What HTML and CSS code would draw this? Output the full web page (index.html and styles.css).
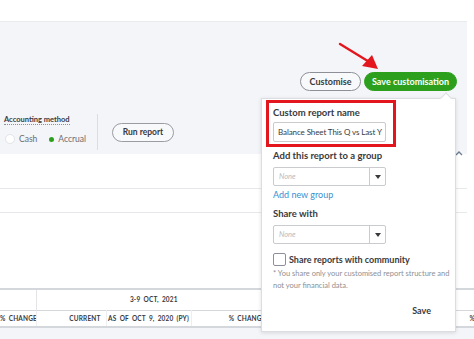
FILE: index.html
```html
<!DOCTYPE html>
<html>
<head>
<meta charset="utf-8">
<link rel="stylesheet" href="styles.css">
</head>
<body>
<div class="page">
  <div class="panel">
    <div class="toolbar">
      <button class="btn btn-outline">Customise</button>
      <button class="btn btn-green">Save customisation</button>
    </div>
    <div class="controls">
      <div class="method">
        <div class="method-label">Accounting method</div>
        <div class="radios">
          <span class="radio"></span><span class="radio-text">Cash</span>
          <span class="radio radio-on"></span><span class="radio-text">Accrual</span>
        </div>
      </div>
      <div class="vsep"></div>
      <button class="btn btn-outline btn-run">Run report</button>
    </div>
  </div>
  <div class="rows">
    <div class="row row1"></div>
    <div class="row row2"></div>
  </div>
  <table class="report">
    <colgroup>
      <col class="w1"><col class="w2"><col class="w3"><col class="w4"><col class="w5">
    </colgroup>
    <tr class="hdr1">
      <td class="c1"></td>
      <td class="group" colspan="3">3-9 OCT, 2021</td>
      <td class="c5"></td>
    </tr>
    <tr class="hdr2">
      <td class="c1 r">% CHANGE</td>
      <td class="c2 r">CURRENT</td>
      <td class="c3">AS OF OCT 9, 2020 (PY)</td>
      <td class="c4 r">% CHANGE</td>
      <td class="c5">%</td>
    </tr>
    <tr class="body-row">
      <td colspan="5"></td>
    </tr>
  </table>

  <svg class="caret" width="8" height="6" viewBox="0 0 8 6"><path d="M1 5 L4 2 L7 5" fill="none" stroke="#6b7c93" stroke-width="1.3"/></svg>

  <svg class="arrow" width="44" height="30" viewBox="0 0 44 30">
    <path d="M2 2 L33 21" stroke="#e3161d" stroke-width="2.4" stroke-linecap="round"/>
    <path d="M40 27 L24 24 L34 13 Z" fill="#e3161d"/>
  </svg>

  <div class="popover">
    <div class="pointer"></div>
    <div class="name-box">
      <div class="label">Custom report name</div>
      <div class="input">Balance Sheet This Q vs Last Y</div>
    </div>
    <div class="label label-group">Add this report to a group</div>
    <div class="select"><span class="placeholder">None</span><span class="drop"><svg width="6" height="4" viewBox="0 0 6 4"><path d="M0 0 H6 L3 4 Z" fill="#393a3d"/></svg></span></div>
    <div class="link">Add new group</div>
    <div class="label label-share">Share with</div>
    <div class="select"><span class="placeholder">None</span><span class="drop"><svg width="6" height="4" viewBox="0 0 6 4"><path d="M0 0 H6 L3 4 Z" fill="#393a3d"/></svg></span></div>
    <div class="check-row"><span class="checkbox"></span><span class="check-text">Share reports with community</span></div>
    <div class="note">* You share only your customised report structure and not your financial data.</div>
    <div class="save-row"><span class="save">Save</span></div>
  </div>
</div>
</body>
</html>
```
FILE: styles.css
```css
* { box-sizing: border-box; }
html, body { margin: 0; padding: 0; background: #fff; }
body {
  font-family: Lato, "Open Sans", sans-serif;
  color: #393a3d;
  width: 474px;
  height: 339px;
  overflow: hidden;
}
.page { position: relative; width: 474px; height: 339px; padding-top: 21px; }

.panel {
  width: 467px;
  height: 133px;
  background: #f4f5f8;
  border-top: 1px solid #e9eaee;
  display: flex;
  flex-direction: column;
}
.toolbar {
  display: flex;
  justify-content: flex-end;
  gap: 3px;
  padding-right: 10px;
  margin-top: 50px;
}
.btn {
  font-family: Lato, sans-serif;
  font-weight: 700;
  font-size: 9px;
  height: 19px;
  border-radius: 10px;
  padding: 0;
  display: flex;
  align-items: center;
  justify-content: center;
  cursor: pointer;
}
.btn-outline {
  background: #f8f9fa;
  border: 1px solid #8d9096;
  color: #393a3d;
  width: 61px;
}
.btn-green {
  background: #2ca01c;
  border: 1px solid #2ca01c;
  color: #fff;
  width: 93px;
}
.controls {
  margin-top: auto;
  margin-bottom: 4px;
  display: flex;
  align-items: stretch;
  height: 36px;
}
.method {
  padding-left: 4px;
  padding-top: 1px;
  width: 97px;
  display: flex;
  flex-direction: column;
  align-items: flex-start;
}
.method-label {
  font-size: 7.5px;
  font-weight: 700;
  border-bottom: 1px dotted #8d9096;
  line-height: 9px;
}
.radios { display: flex; align-items: center; height: 10px; margin-top: 9px; font-size: 8.5px; color: #6b6c72; }
.radio {
  width: 10px; height: 10px; border-radius: 50%;
  background: #fff; border: 1px solid #e3e4e8;
  margin-left: 1px;
}
.radio-on {
  margin-left: 12px;
  width: 5px; height: 5px; border: none;
  background: #2ca01c;
}
.radio-text { margin-left: 4px; }
.vsep { width: 1px; background: #dcdde1; }
.btn-run { align-self: center; margin-left: 14px; width: 62px; font-size: 8.5px; border-color: #9a9ca2; }

.rows { width: 467px; }
.row { border-bottom: 1px solid #e7e8eb; }
.row1 { height: 35px; }
.row2 { height: 24px; }

.report {
  margin-top: 75px;
  border-collapse: collapse;
  width: 474px;
  table-layout: fixed;
  font-size: 6.5px;
  letter-spacing: 0.15px;
  word-spacing: 1.5px;
  font-weight: 700;
  color: #393a3d;
}
.w1 { width: 36px; }
.w2 { width: 70px; }
.w3 { width: 85px; }
.w4 { width: 80px; }
.w5 { width: 203px; }
.report td { padding: 0 5px; white-space: nowrap; overflow: hidden; }
.hdr1 { height: 21px; border-top: 2px solid #d4d7dc; border-bottom: 1px solid #d4d7dc; }
.hdr1 .c1 { border-right: 1px solid #e3e4e8; }
.group { text-align: center; }
.hdr2 { height: 17px; border-bottom: 2px solid #d4d7dc; }
.hdr2 td { border-right: 1px solid #eceef0; }
.r { text-align: right; }
.report .c1 { padding: 0 4px 0 0; }
.report .c3 { padding: 0; text-align: center; }
.body-row { height: 12px; background: #f4f5f8; }
.report .hdr2 .c5 { padding-left: 198px; border-right: none; }

.caret { position: absolute; left: 455px; top: 150px; }
.arrow { position: absolute; left: 338px; top: 42px; }

.popover {
  position: absolute;
  left: 261px;
  top: 98px;
  width: 195px;
  height: 234px;
  background: #fff;
  border: 1px solid #dcdde1;
  box-shadow: 0 1px 4px rgba(0,0,0,0.12);
  padding: 0 11px;
}
.pointer {
  position: absolute;
  right: 5px;
  top: -5px;
  width: 8px;
  height: 8px;
  background: #fff;
  border-left: 1px solid #dcdde1;
  border-top: 1px solid #dcdde1;
  transform: rotate(45deg);
}
.label { font-size: 9.5px; font-weight: 700; line-height: 14px; color: #393a3d; }
.name-box {
  margin: 1px 0 0 -7px;
  width: 130px;
  border: 3px solid #e3161d;
  padding: 3px 7px 2px 4px;
}
.input {
  margin-top: 2px;
  height: 20px;
  width: 113px;
  border: 1px solid #c9cbcf;
  border-radius: 2px;
  font-size: 8px;
  letter-spacing: -0.1px;
  line-height: 18px;
  padding-left: 4px;
  white-space: nowrap;
  overflow: hidden;
}
.label-group { margin-top: 2px; }
.select {
  margin-top: 4px;
  width: 113px;
  height: 19px;
  border: 1px solid #c9cbcf;
  border-radius: 2px;
  display: flex;
}
.placeholder { flex: 1; font-size: 7.5px; font-style: italic; color: #b8bac0; line-height: 17px; padding-left: 5px; }
.drop { width: 16px; border-left: 1px solid #c9cbcf; display: flex; align-items: center; justify-content: center; }
.link { font-size: 9px; color: #3a8fd0; line-height: 14px; margin-top: 2px; }
.label-share { margin-top: 5px; }
.label-share + .select { margin-top: 4px; }
.check-row { display: flex; align-items: center; margin-top: 9px; }
.checkbox { width: 13px; height: 13px; border: 1px solid #8d9096; border-radius: 2px; }
.check-text { margin-left: 3px; font-size: 9px; font-weight: 700; }
.note { margin-top: 2px; font-size: 7.5px; line-height: 12px; color: #8d9096; width: 185px; }
.save-row { display: flex; justify-content: flex-end; padding-right: 13px; margin-top: 12px; }
.save { font-size: 9px; font-weight: 700; line-height: 14px; }
```
